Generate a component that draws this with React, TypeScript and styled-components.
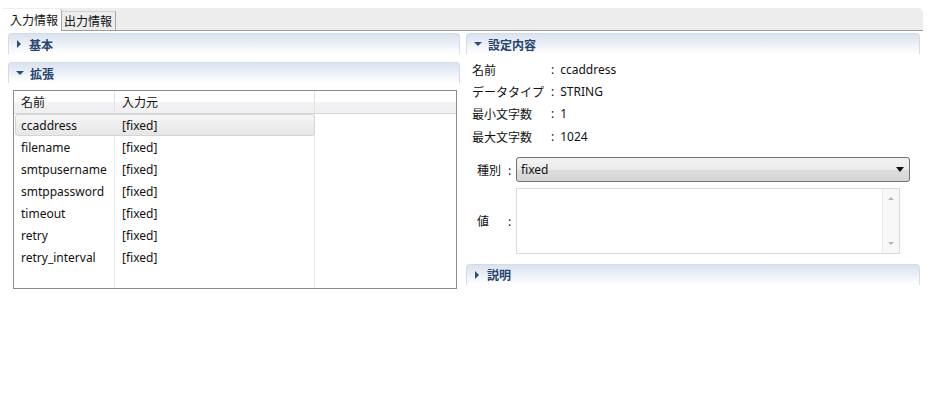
import React from "react";
import styled, { createGlobalStyle } from "styled-components";

const Global = createGlobalStyle`
  html, body { margin: 0; padding: 0; background: #fff; }
  body {
    font-family: "Noto Sans", "Noto Sans CJK JP", sans-serif;
    font-size: 12px;
    color: #111;
  }
`;

const Page = styled.div`
  width: 930px;
  height: 410px;
  padding-top: 8px;
  box-sizing: border-box;
`;

const TabStrip = styled.div`
  display: flex;
  align-items: flex-end;
  margin-left: 3px;
  width: 920px;
  height: 22px;
  background: #ededed;
  border-bottom: 1px solid #9a9a9a;
  border-top-right-radius: 5px;
`;

const Tab = styled.div<{ $active?: boolean }>`
  height: ${(p) => (p.$active ? 22 : 18)}px;
  line-height: ${(p) => (p.$active ? 22 : 18)}px;
  padding: 0 3px 0 ${(p) => (p.$active ? 7 : 2)}px;
  background: ${(p) => (p.$active ? "#fff" : "#ededed")};
  border-right: 1px solid #a9a9a9;
  border-top: ${(p) => (p.$active ? "none" : "1px solid #d0d0d0")};
  margin-bottom: ${(p) => (p.$active ? -1 : 0)}px;
  font-family: "Noto Sans CJK JP", sans-serif;
  font-size: 12px;
  color: #111;
  ${(p) => (p.$active ? "border-top-right-radius: 3px;" : "")}
`;

const Body = styled.div`
  display: flex;
  gap: 6px;
  padding: 2px 0 0 8px;
`;

const Column = styled.div<{ $w: number }>`
  width: ${(p) => p.$w}px;
  display: flex;
  flex-direction: column;
`;

const SectionHeader = styled.div<{ $mt?: number }>`
  display: flex;
  align-items: center;
  height: 21px;
  margin-top: ${(p) => p.$mt ?? 0}px;
  padding-left: 7px;
  border: 1px solid #d3dce8;
  border-bottom: none;
  border-radius: 4px 4px 0 0;
  background: linear-gradient(#d9e2f0 0%, #eef2f8 55%, #ffffff 100%);
  font-family: "Noto Sans CJK JP", sans-serif;
  font-weight: bold;
  font-size: 12px;
  color: #26456f;
  gap: 6px;
  box-sizing: border-box;
`;

const Arrow = styled.span<{ $open?: boolean }>`
  width: 0;
  height: 0;
  display: inline-block;
  ${(p) =>
    p.$open
      ? `border-left: 4px solid transparent; border-right: 4px solid transparent; border-top: 4px solid #2c4c7a;`
      : `border-top: 4px solid transparent; border-bottom: 4px solid transparent; border-left: 4px solid #2c4c7a; margin: 0 2px 0 1px;`}
`;

const Table = styled.div`
  margin: 7px 3px 0 5px;
  height: 199px;
  border: 1px solid #8c8c8c;
  box-sizing: border-box;
  display: flex;
  flex-direction: column;
  background:
    linear-gradient(#ececec, #ececec) 100px 0 / 1px 100% no-repeat,
    linear-gradient(#ececec, #ececec) 300px 0 / 1px 100% no-repeat,
    #fff;
`;

const HeadRow = styled.div`
  display: grid;
  grid-template-columns: 101px 200px 1fr;
  height: 23px;
  border-bottom: 1px solid #d6d6d6;
  background: linear-gradient(#ffffff 0%, #ffffff 45%, #f2f2f4 55%, #f0f0f2 100%);
  box-sizing: border-box;
`;

const HeadCell = styled.div`
  padding-left: 7px;
  line-height: 22px;
  font-family: "Noto Sans CJK JP", sans-serif;
  border-right: 1px solid #e2e2e2;
`;

const Row = styled.div<{ $sel?: boolean }>`
  display: grid;
  grid-template-columns: 101px 200px;
  height: 22px;
  align-items: center;
  margin-left: 1px;
  width: 300px;
  box-sizing: border-box;
  border-radius: 3px;
  border: 1px solid ${(p) => (p.$sel ? "#d4d4d4" : "transparent")};
  background: ${(p) => (p.$sel ? "linear-gradient(#f6f6f6, #e6e6e6)" : "transparent")};
`;

const Cell = styled.div`
  padding-left: 5px;
`;

const Fields = styled.div`
  padding-top: 4px;
`;

const Field = styled.div`
  display: grid;
  grid-template-columns: 78px auto;
  height: 22.4px;
  align-items: center;
  padding-left: 6px;
`;

const FieldLabel = styled.span`
  font-family: "Noto Sans CJK JP", sans-serif;
`;

const Colon = styled.span`
  margin-right: 6px;
  margin-left: 1px;
`;

const Form = styled.div`
  display: grid;
  grid-template-columns: 39px 1fr;
  row-gap: 6px;
  padding-top: 9px;
  padding-left: 11px;
`;

const FormLabel = styled.div`
  display: flex;
  align-items: center;
  font-family: "Noto Sans CJK JP", sans-serif;
`;

const LabelText = styled.span`
  width: 31px;
`;

const Combo = styled.div`
  height: 25px;
  margin-right: 10px;
  border: 1px solid #707070;
  border-radius: 3px;
  background: linear-gradient(#f3f3f3 0%, #ebebeb 50%, #dddddd 52%, #d6d6d6 100%);
  display: flex;
  align-items: center;
  justify-content: space-between;
  padding: 0 5px 0 4px;
  box-sizing: border-box;
`;

const ComboArrow = styled.span`
  width: 0;
  height: 0;
  border-left: 4px solid transparent;
  border-right: 4px solid transparent;
  border-top: 5px solid #111;
`;

const TextArea = styled.div`
  height: 66px;
  margin-right: 20px;
  border: 1px solid #dadada;
  box-sizing: border-box;
  display: flex;
  justify-content: flex-end;
`;

const ScrollBar = styled.div`
  width: 17px;
  border-left: 1px solid #eaeaea;
  background: #f8f8f8;
  display: flex;
  flex-direction: column;
  justify-content: space-between;
  align-items: center;
  padding: 8px 0 8px;
  box-sizing: border-box;
`;

const ScrollArrow = styled.span<{ $up?: boolean }>`
  width: 0;
  height: 0;
  border-left: 3px solid transparent;
  border-right: 3px solid transparent;
  ${(p) => (p.$up ? "border-bottom: 3px solid #b5b5b5;" : "border-top: 3px solid #b5b5b5;")}
`;

const rows = [
  "ccaddress",
  "filename",
  "smtpusername",
  "smtppassword",
  "timeout",
  "retry",
  "retry_interval",
];

const fields: [string, string][] = [
  ["名前", "ccaddress"],
  ["データタイプ", "STRING"],
  ["最小文字数", "1"],
  ["最大文字数", "1024"],
];

export default function App() {
  return (
    <Page>
      <Global />
      <TabStrip>
        <Tab $active>入力情報</Tab>
        <Tab>出力情報</Tab>
      </TabStrip>
      <Body>
        <Column $w={452}>
          <SectionHeader>
            <Arrow />
            基本
          </SectionHeader>
          <SectionHeader $mt={8}>
            <Arrow $open />
            拡張
          </SectionHeader>
          <Table>
            <HeadRow>
              <HeadCell>名前</HeadCell>
              <HeadCell>入力元</HeadCell>
              <div />
            </HeadRow>
            {rows.map((r, i) => (
              <Row key={r} $sel={i === 0}>
                <Cell>{r}</Cell>
                <Cell>[fixed]</Cell>
              </Row>
            ))}
          </Table>
        </Column>
        <Column $w={454}>
          <SectionHeader>
            <Arrow $open />
            設定内容
          </SectionHeader>
          <Fields>
            {fields.map(([k, v]) => (
              <Field key={k}>
                <FieldLabel>{k}</FieldLabel>
                <span>
                  <Colon>:</Colon>
                  {v}
                </span>
              </Field>
            ))}
          </Fields>
          <Form>
            <FormLabel>
              <LabelText>種別</LabelText>:
            </FormLabel>
            <Combo>
              <span>fixed</span>
              <ComboArrow />
            </Combo>
            <FormLabel>
              <LabelText>値</LabelText>:
            </FormLabel>
            <TextArea>
              <ScrollBar>
                <ScrollArrow $up />
                <ScrollArrow />
              </ScrollBar>
            </TextArea>
          </Form>
          <SectionHeader $mt={10}>
            <Arrow />
            説明
          </SectionHeader>
        </Column>
      </Body>
    </Page>
  );
}
